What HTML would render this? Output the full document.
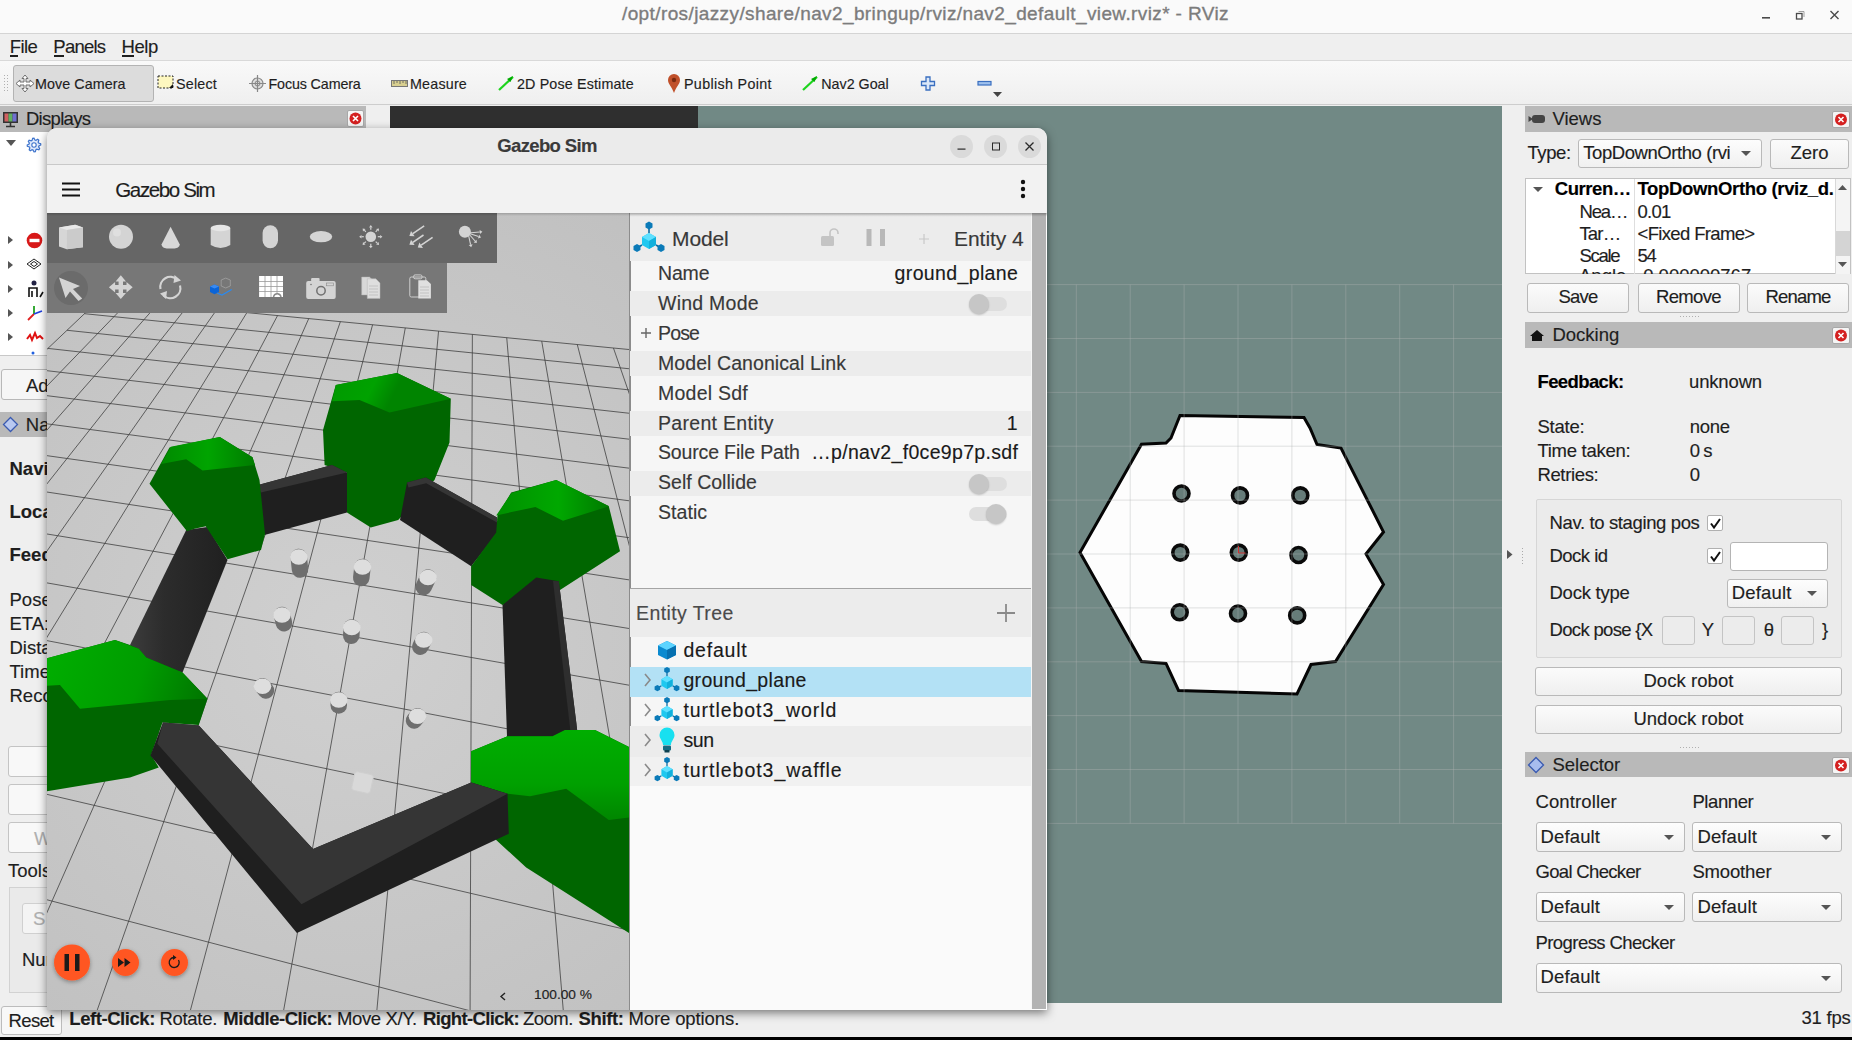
<!DOCTYPE html><html><head><meta charset="utf-8"><style>
html,body{margin:0;padding:0;width:1852px;height:1040px;overflow:hidden;background:#efefef;font-family:"Liberation Sans",sans-serif;}
div,span,svg{position:absolute;box-sizing:border-box;}
.t{white-space:nowrap;line-height:1;-webkit-text-stroke:0.15px currentColor;}
</style></head><body>
<div style="left:0px;top:0px;width:1852px;height:33px;background:#fafafa;"></div>
<div style="left:0px;top:33px;width:1852px;height:1px;background:#d4d4d4;"></div>
<span class="t" style="left:622.00px;top:3.92px;font-size:19px;color:#7c7c7c;letter-spacing:0.389px;-webkit-text-stroke:0.35px #7c7c7c;">/opt/ros/jazzy/share/nav2_bringup/rviz/nav2_default_view.rviz* - RViz</span>
<svg style="position:absolute;left:1755px;top:5px;" width="95" height="26" viewBox="0 0 95 26">
<rect x="7" y="12" width="8" height="1.6" fill="#4a4a4a"/>
<rect x="41.5" y="8.5" width="5.5" height="5.5" fill="none" stroke="#4a4a4a" stroke-width="1.3"/>
<path d="M43.5 6.5 H49 V12" fill="none" stroke="#8a8a8a" stroke-width="0.8"/>
<path d="M75.5 6 L83.5 14 M83.5 6 L75.5 14" stroke="#4a4a4a" stroke-width="1.4"/>
</svg>
<div style="left:0px;top:34px;width:1852px;height:26px;background:#efefef;"></div>
<div style="left:0px;top:60px;width:1852px;height:1px;background:#d9d9d9;"></div>
<span class="t" style="left:9.70px;top:38.14px;font-size:18.5px;color:#1e1e1e;letter-spacing:-0.603px;">File</span>
<span class="t" style="left:53.30px;top:38.14px;font-size:18.5px;color:#1e1e1e;letter-spacing:-0.761px;">Panels</span>
<span class="t" style="left:121.50px;top:38.14px;font-size:18.5px;color:#1e1e1e;letter-spacing:-0.387px;">Help</span>
<div style="left:9.5px;top:54.5px;width:8px;height:2px;background:#1e1e1e;"></div>
<div style="left:53.5px;top:54.5px;width:10px;height:2px;background:#1e1e1e;"></div>
<div style="left:121.5px;top:54.5px;width:12px;height:2px;background:#1e1e1e;"></div>
<div style="left:0px;top:61px;width:1852px;height:43px;background:linear-gradient(#f9f9f9,#efefef);"></div>
<div style="left:0px;top:104px;width:1852px;height:1px;background:#d0d0d0;"></div>
<svg style="position:absolute;left:3px;top:74px;" width="6" height="19" viewBox="0 0 6 19"><rect x="1" y="1" width="1" height="1" fill="#b0b0b0"/><rect x="1" y="4" width="1" height="1" fill="#b0b0b0"/><rect x="1" y="7" width="1" height="1" fill="#b0b0b0"/><rect x="1" y="10" width="1" height="1" fill="#b0b0b0"/><rect x="1" y="13" width="1" height="1" fill="#b0b0b0"/><rect x="1" y="16" width="1" height="1" fill="#b0b0b0"/><rect x="4" y="1" width="1" height="1" fill="#b0b0b0"/><rect x="4" y="4" width="1" height="1" fill="#b0b0b0"/><rect x="4" y="7" width="1" height="1" fill="#b0b0b0"/><rect x="4" y="10" width="1" height="1" fill="#b0b0b0"/><rect x="4" y="13" width="1" height="1" fill="#b0b0b0"/><rect x="4" y="16" width="1" height="1" fill="#b0b0b0"/></svg>
<div style="left:13px;top:65px;width:141px;height:37px;background:#dcdcdc;border:1px solid #b3b3b3;border-radius:3px;"></div>
<span class="t" style="left:34.90px;top:77.00px;font-size:14.3px;color:#1e1e1e;letter-spacing:0.081px;">Move Camera</span>
<span class="t" style="left:176.00px;top:77.00px;font-size:14.3px;color:#1e1e1e;letter-spacing:0.209px;">Select</span>
<span class="t" style="left:268.50px;top:77.00px;font-size:14.3px;color:#1e1e1e;letter-spacing:-0.131px;">Focus Camera</span>
<span class="t" style="left:410.00px;top:77.00px;font-size:14.3px;color:#1e1e1e;letter-spacing:0.195px;">Measure</span>
<span class="t" style="left:517.00px;top:77.00px;font-size:14.3px;color:#1e1e1e;letter-spacing:0.147px;">2D Pose Estimate</span>
<span class="t" style="left:684.00px;top:77.00px;font-size:14.3px;color:#1e1e1e;letter-spacing:0.333px;">Publish Point</span>
<span class="t" style="left:821.30px;top:77.00px;font-size:14.3px;color:#1e1e1e;letter-spacing:-0.018px;">Nav2 Goal</span>
<svg style="position:absolute;left:15px;top:74px;" width="20" height="20" viewBox="0 0 20 20"><g fill="#fff" stroke="#707070" stroke-width="1">
<path d="M10 1 L13 4.5 H11 V8 H15 V6 L19 9.5 L15 13 V11 H11 V14.5 H13 L10 18 L7 14.5 H9 V11 H5 V13 L1 9.5 L5 6 V8 H9 V4.5 H7 Z"/></g></svg>
<svg style="position:absolute;left:157px;top:75px;" width="18" height="15" viewBox="0 0 18 15"><rect x="1" y="1" width="15" height="12" fill="#fdf7c0" stroke="#222" stroke-width="1" stroke-dasharray="2,1.5"/><path d="M12 13 L16 9 L16 13Z" fill="#111"/></svg>
<svg style="position:absolute;left:248px;top:74px;" width="19" height="19" viewBox="0 0 19 19"><circle cx="9.5" cy="9.5" r="5.5" fill="#ddd" stroke="#888" stroke-width="1.2"/><path d="M9.5 1 V18 M1 9.5 H18" stroke="#888" stroke-width="1.2"/><circle cx="9.5" cy="9.5" r="2.5" fill="none" stroke="#888"/></svg>
<svg style="position:absolute;left:391px;top:79px;" width="17" height="9" viewBox="0 0 17 9"><rect x="0.5" y="1.5" width="16" height="6" fill="#d8cf90" stroke="#777" stroke-width="1"/><path d="M3 2v3M6 2v2M9 2v3M12 2v2M15 2v3" stroke="#555" stroke-width="0.8"/></svg>
<svg style="position:absolute;left:498px;top:75px;" width="17" height="16" viewBox="0 0 17 16"><path d="M1 15 L15 2" stroke="#1ed41e" stroke-width="2.2"/><path d="M15 1 L9 4 L12.5 7Z" fill="#0a0"/></svg>
<svg style="position:absolute;left:667px;top:73px;" width="14" height="21" viewBox="0 0 14 21"><path d="M7 20 C5 14 1 11 1 7 A6 6 0 0 1 13 7 C13 11 9 14 7 20Z" fill="#c0502a"/><circle cx="7" cy="7" r="2.2" fill="#7a2a10"/></svg>
<svg style="position:absolute;left:802px;top:75px;" width="17" height="16" viewBox="0 0 17 16"><path d="M1 15 L15 2" stroke="#1ed41e" stroke-width="2.2"/><path d="M15 1 L9 4 L12.5 7Z" fill="#0a0"/></svg>
<svg style="position:absolute;left:920px;top:76px;" width="16" height="15" viewBox="0 0 16 15"><path d="M6 1 H10 V5.5 H14.5 V9.5 H10 V14 H6 V9.5 H1.5 V5.5 H6Z" fill="#dce8f8" stroke="#3a6fc0" stroke-width="1.3"/></svg>
<svg style="position:absolute;left:977px;top:80px;" width="16" height="7" viewBox="0 0 16 7"><rect x="1" y="1.5" width="13" height="3.5" fill="#9fc1ee" stroke="#3a6fc0" stroke-width="1.2"/></svg>
<svg style="position:absolute;left:992px;top:91px;" width="11" height="7" viewBox="0 0 11 7"><path d="M1 1 H10 L5.5 6Z" fill="#444"/></svg>
<div style="left:0px;top:106px;width:366px;height:26px;background:#b9b9b9;"></div>
<span class="t" style="left:25.90px;top:109.74px;font-size:18.5px;color:#1e1e1e;letter-spacing:-0.689px;">Displays</span>
<svg style="position:absolute;left:2px;top:111px;" width="17" height="17" viewBox="0 0 17 17"><rect x="1" y="1" width="15" height="11" fill="#333"/><rect x="2.5" y="2.5" width="4" height="8" fill="#d06060"/><rect x="6.5" y="2.5" width="4" height="8" fill="#60b060"/><rect x="10.5" y="2.5" width="4" height="8" fill="#7070d0"/><path d="M8.5 12 V15 M4 15.5 H13" stroke="#333" stroke-width="1.6"/></svg>
<div style="left:347px;top:110px;width:17px;height:17px;background:#f5f5f5;border:1px solid #a8a8a8;border-radius:2px;"></div>
<svg style="position:absolute;left:349px;top:112px;" width="13" height="13" viewBox="0 0 13 13"><circle cx="6.5" cy="6.5" r="6" fill="#d42020"/><path d="M4 4 L9 9 M9 4 L4 9" stroke="#fff" stroke-width="1.6"/></svg>
<div style="left:0px;top:132px;width:366px;height:224px;background:#ffffff;"></div>
<div style="left:0px;top:355px;width:366px;height:1px;background:#c8c8c8;"></div>
<svg style="position:absolute;left:5px;top:139px;" width="12" height="9" viewBox="0 0 12 9"><path d="M1 1 H11 L6 7Z" fill="#555"/></svg>
<svg style="position:absolute;left:26px;top:137px;" width="16" height="16" viewBox="0 0 16 16"><polygon points="14.66,6.65 14.80,7.98 12.91,8.96 12.63,9.90 13.67,11.76 12.83,12.79 10.79,12.15 9.93,12.61 9.35,14.66 8.02,14.80 7.04,12.91 6.10,12.63 4.24,13.67 3.21,12.83 3.85,10.79 3.39,9.93 1.34,9.35 1.20,8.02 3.09,7.04 3.37,6.10 2.33,4.24 3.17,3.21 5.21,3.85 6.07,3.39 6.65,1.34 7.98,1.20 8.96,3.09 9.90,3.37 11.76,2.33 12.79,3.17 12.15,5.21 12.61,6.07" fill="#dfe9fb" stroke="#3f74cc" stroke-width="1.2"/><circle cx="8" cy="8" r="2.2" fill="#fff" stroke="#3f74cc" stroke-width="1.1"/></svg>
<svg style="position:absolute;left:7px;top:235.4px;" width="8" height="10" viewBox="0 0 8 10"><path d="M1 1 L6 5 L1 9Z" fill="#555"/></svg>
<svg style="position:absolute;left:7px;top:259.6px;" width="8" height="10" viewBox="0 0 8 10"><path d="M1 1 L6 5 L1 9Z" fill="#555"/></svg>
<svg style="position:absolute;left:7px;top:283.5px;" width="8" height="10" viewBox="0 0 8 10"><path d="M1 1 L6 5 L1 9Z" fill="#555"/></svg>
<svg style="position:absolute;left:7px;top:307.7px;" width="8" height="10" viewBox="0 0 8 10"><path d="M1 1 L6 5 L1 9Z" fill="#555"/></svg>
<svg style="position:absolute;left:7px;top:331.5px;" width="8" height="10" viewBox="0 0 8 10"><path d="M1 1 L6 5 L1 9Z" fill="#555"/></svg>
<svg style="position:absolute;left:26px;top:232px;" width="17" height="17" viewBox="0 0 17 17"><circle cx="8.5" cy="8.5" r="7.8" fill="#d81818"/><rect x="3.5" y="6.8" width="10" height="3.4" fill="#fff"/></svg>
<svg style="position:absolute;left:26px;top:258px;" width="16" height="12" viewBox="0 0 16 12"><path d="M8 1 L15 6 L8 11 L1 6Z" fill="none" stroke="#222" stroke-width="1"/><path d="M8 3.5 L11.5 6 L8 8.5 L4.5 6Z" fill="none" stroke="#222" stroke-width="1"/></svg>
<svg style="position:absolute;left:26px;top:280px;" width="18" height="18" viewBox="0 0 18 18"><circle cx="8" cy="3" r="2.5" fill="#224"/><path d="M3 17 V8 H11 V17 M6 11 V17 M14 17 L17 12" stroke="#111" stroke-width="1.6" fill="none"/></svg>
<svg style="position:absolute;left:26px;top:304px;" width="17" height="17" viewBox="0 0 17 17"><path d="M8 10 L2 16 M8 10 L8 2 M8 10 L16 7" stroke-width="1.8" fill="none"/><path d="M8 10 L2 16" stroke="#e02020" stroke-width="1.8"/><path d="M8 10 L8 2" stroke="#20a020" stroke-width="1.8"/><path d="M8 10 L16 7" stroke="#2040e0" stroke-width="1.8"/></svg>
<svg style="position:absolute;left:26px;top:330px;" width="18" height="14" viewBox="0 0 18 14"><path d="M1 9 L4 5 L6 10 L9 3 L11 8 L14 6 L17 9" stroke="#e01010" stroke-width="2" fill="none"/></svg>
<svg style="position:absolute;left:30px;top:350px;" width="6" height="6" viewBox="0 0 6 6"><circle cx="3" cy="3" r="1.5" fill="#2060e0"/></svg>
<div style="left:1px;top:369px;width:120px;height:31px;background:#f6f6f6;border:1px solid #b8b8b8;border-radius:3px;"></div>
<span class="t" style="left:26.00px;top:377.14px;font-size:18.5px;color:#1e1e1e;">Add</span>
<div style="left:0px;top:412px;width:366px;height:25px;background:#b9b9b9;"></div>
<svg style="position:absolute;left:2px;top:416px;" width="17" height="17" viewBox="0 0 17 17"><path d="M8.5 1.5 L15.5 8.5 L8.5 15.5 L1.5 8.5Z" fill="#b8c8f0" stroke="#3a5ab0" stroke-width="1.3"/></svg>
<span class="t" style="left:25.80px;top:416.14px;font-size:18.5px;color:#1e1e1e;">Navigation 2</span>
<span class="t" style="left:9.50px;top:460.14px;font-size:18.5px;color:#1e1e1e;font-weight:bold;">Navigation:</span>
<span class="t" style="left:9.50px;top:503.14px;font-size:18.5px;color:#1e1e1e;font-weight:bold;">Localization:</span>
<span class="t" style="left:9.50px;top:546.14px;font-size:18.5px;color:#1e1e1e;font-weight:bold;">Feedback:</span>
<span class="t" style="left:9.50px;top:591.14px;font-size:18.5px;color:#1e1e1e;">Poses</span>
<span class="t" style="left:9.50px;top:615.14px;font-size:18.5px;color:#1e1e1e;">ETA:</span>
<span class="t" style="left:9.50px;top:639.14px;font-size:18.5px;color:#1e1e1e;">Distance</span>
<span class="t" style="left:9.50px;top:663.14px;font-size:18.5px;color:#1e1e1e;">Time</span>
<span class="t" style="left:9.50px;top:687.14px;font-size:18.5px;color:#1e1e1e;">Recoveries</span>
<div style="left:8px;top:746px;width:150px;height:31px;background:#f8f8f8;border:1px solid #c4c4c4;border-radius:3px;"></div>
<div style="left:8px;top:784px;width:150px;height:31px;background:#f8f8f8;border:1px solid #c4c4c4;border-radius:3px;"></div>
<div style="left:8px;top:822px;width:150px;height:31px;background:#f8f8f8;border:1px solid #c4c4c4;border-radius:3px;"></div>
<span class="t" style="left:34.00px;top:830.14px;font-size:18.5px;color:#b0b0b0;">W</span>
<span class="t" style="left:8.00px;top:862.14px;font-size:18.5px;color:#1e1e1e;">Tools</span>
<div style="left:9px;top:887px;width:300px;height:106px;background:#eaeaea;border:1px solid #d2d2d2;"></div>
<div style="left:22px;top:903px;width:200px;height:31px;background:#f4f4f4;border:1px solid #d0d0d0;border-radius:3px;"></div>
<span class="t" style="left:33.00px;top:910.14px;font-size:18.5px;color:#b0b0b0;">S</span>
<span class="t" style="left:22.00px;top:951.14px;font-size:18.5px;color:#1e1e1e;">Number</span>
<div style="left:366px;top:105px;width:24px;height:23px;background:#efefef;"></div>
<div style="left:390px;top:106px;width:1113px;height:897px;background:#718985;"></div>
<div style="left:0px;top:104px;width:1852px;height:1px;background:#cdcdcd;"></div>
<div style="left:0px;top:105px;width:1852px;height:1px;background:#efefef;"></div>
<div style="left:390px;top:106px;width:308px;height:22px;background:#2f2f2f;"></div>
<div style="left:0px;top:1003px;width:1852px;height:33px;background:#efefef;"></div>
<div style="left:1px;top:1006px;width:61px;height:29px;background:#f8f8f8;border:1px solid #bcbcbc;border-radius:3px;"></div>
<span class="t" style="left:8.60px;top:1012.14px;font-size:18.5px;color:#1e1e1e;letter-spacing:-0.666px;">Reset</span>
<span class="t" style="left:69.30px;top:1010.44px;font-size:18.5px;color:#1e1e1e;font-weight:bold;letter-spacing:-0.441px;">Left-Click:</span>
<span class="t" style="left:159.50px;top:1010.44px;font-size:18.5px;color:#1e1e1e;letter-spacing:-0.307px;">Rotate.</span>
<span class="t" style="left:223.30px;top:1010.44px;font-size:18.5px;color:#1e1e1e;font-weight:bold;letter-spacing:-0.479px;">Middle-Click:</span>
<span class="t" style="left:337.00px;top:1010.44px;font-size:18.5px;color:#1e1e1e;letter-spacing:-0.362px;">Move X/Y.</span>
<span class="t" style="left:423.00px;top:1010.44px;font-size:18.5px;color:#1e1e1e;font-weight:bold;letter-spacing:-0.650px;">Right-Click:</span>
<span class="t" style="left:522.90px;top:1010.44px;font-size:18.5px;color:#1e1e1e;letter-spacing:-0.466px;">Zoom.</span>
<span class="t" style="left:578.50px;top:1010.44px;font-size:18.5px;color:#1e1e1e;font-weight:bold;letter-spacing:-0.361px;">Shift:</span>
<span class="t" style="left:628.40px;top:1010.44px;font-size:18.5px;color:#1e1e1e;letter-spacing:-0.099px;">More options.</span>
<span class="t" style="left:1801.50px;top:1009.14px;font-size:18.5px;color:#1e1e1e;letter-spacing:-0.233px;">31 fps</span>
<div style="left:0px;top:1037px;width:1852px;height:3px;background:#000000;"></div>
<svg style="position:absolute;left:390px;top:105px;" width="1113" height="898" viewBox="0 0 1113 898"><polygon points="790.0,310.5 914.0,312.5 920.0,323.0 927.0,339.5 951.0,343.0 993.5,427.0 976.0,449.0 993.5,479.5 945.5,556.5 921.0,559.5 907.0,589.0 788.5,585.5 776.0,558.4 751.5,556.5 690.0,447.6 751.5,339.3 776.0,338.0 781.0,333.0" fill="#fdfdfd" stroke="#050505" stroke-width="3" stroke-linejoin="miter"/><circle cx="791.5" cy="388.5" r="7.5" fill="#667c79" stroke="#0a0a0a" stroke-width="3.6"/><circle cx="850" cy="390.4" r="7.5" fill="#667c79" stroke="#0a0a0a" stroke-width="3.6"/><circle cx="910.3" cy="390.4" r="7.5" fill="#667c79" stroke="#0a0a0a" stroke-width="3.6"/><circle cx="790.3" cy="447.6" r="7.5" fill="#667c79" stroke="#0a0a0a" stroke-width="3.6"/><circle cx="848.8" cy="447.6" r="7.5" fill="#667c79" stroke="#0a0a0a" stroke-width="3.6"/><circle cx="908.5" cy="450" r="7.5" fill="#667c79" stroke="#0a0a0a" stroke-width="3.6"/><circle cx="789.7" cy="507.29999999999995" r="7.5" fill="#667c79" stroke="#0a0a0a" stroke-width="3.6"/><circle cx="848" cy="508.5" r="7.5" fill="#667c79" stroke="#0a0a0a" stroke-width="3.6"/><circle cx="907.2" cy="510.4" r="7.5" fill="#667c79" stroke="#0a0a0a" stroke-width="3.6"/><path d="M578.5 179.60000000000002V718.4M578.5 179.6H1117.5M632.4 179.60000000000002V718.4M578.5 233.5H1117.5M686.3 179.60000000000002V718.4M578.5 287.4H1117.5M740.2 179.60000000000002V718.4M578.5 341.2H1117.5M794.1 179.60000000000002V718.4M578.5 395.1H1117.5M848.0 179.60000000000002V718.4M578.5 449.0H1117.5M901.9 179.60000000000002V718.4M578.5 502.9H1117.5M955.8 179.60000000000002V718.4M578.5 556.8H1117.5M1009.7 179.60000000000002V718.4M578.5 610.6H1117.5M1063.6 179.60000000000002V718.4M578.5 664.5H1117.5M1117.5 179.60000000000002V718.4M578.5 718.4H1117.5" stroke="rgba(175,180,180,0.38)" stroke-width="1" fill="none"/><path d="M848.5 448 h7 M848.5 448 v-7" stroke="#d03030" stroke-width="1"/></svg>
<div style="left:47px;top:128px;width:1000px;height:882px;border-radius:10px 10px 0 0;box-shadow:0 3px 10px rgba(0,0,0,0.5);background:#f6f6f6;overflow:hidden"><div style="left:0;top:0;width:1000px;height:37px;background:#ebebeb;border-bottom:1px solid #c9c9c9"></div><div style="left:0;top:37px;width:1000px;height:48px;background:#f2f2f2"></div></div>
<span class="t" style="left:497.30px;top:137.14px;font-size:18.5px;color:#3a3a3a;font-weight:bold;letter-spacing:-0.649px;">Gazebo Sim</span>
<svg style="position:absolute;left:949.5px;top:134.5px;" width="23" height="23" viewBox="0 0 23 23"><circle cx="11.5" cy="11.5" r="11.5" fill="#dadada"/></svg>
<svg style="position:absolute;left:983.5px;top:134.5px;" width="23" height="23" viewBox="0 0 23 23"><circle cx="11.5" cy="11.5" r="11.5" fill="#dadada"/></svg>
<svg style="position:absolute;left:1017.5px;top:134.5px;" width="23" height="23" viewBox="0 0 23 23"><circle cx="11.5" cy="11.5" r="11.5" fill="#dadada"/></svg>
<svg style="position:absolute;left:949.5px;top:134.5px;" width="23" height="23" viewBox="0 0 23 23"><rect x="7.5" y="13.5" width="8" height="1.2" fill="#2a2a2a"/></svg>
<svg style="position:absolute;left:983.5px;top:134.5px;" width="23" height="23" viewBox="0 0 23 23"><rect x="8.5" y="8" width="7" height="7" fill="none" stroke="#2a2a2a" stroke-width="1"/></svg>
<svg style="position:absolute;left:1017.5px;top:134.5px;" width="23" height="23" viewBox="0 0 23 23"><path d="M7.5 7.5 L15.5 15.5 M15.5 7.5 L7.5 15.5" stroke="#2a2a2a" stroke-width="1.3"/></svg>
<svg style="position:absolute;left:61px;top:181px;" width="20" height="16" viewBox="0 0 20 16"><rect x="1" y="1.5" width="18" height="2" fill="#111"/><rect x="1" y="7.5" width="18" height="2" fill="#111"/><rect x="1" y="13.5" width="18" height="2" fill="#111"/></svg>
<span class="t" style="left:115.30px;top:179.95px;font-size:20.5px;color:#1e1e1e;letter-spacing:-1.380px;">Gazebo Sim</span>
<svg style="position:absolute;left:1019px;top:178px;" width="8" height="22" viewBox="0 0 8 22"><circle cx="4" cy="4" r="2.2" fill="#111"/><circle cx="4" cy="11" r="2.2" fill="#111"/><circle cx="4" cy="18" r="2.2" fill="#111"/></svg>
<div style="left:47px;top:213px;width:1000px;height:3px;background:linear-gradient(rgba(0,0,0,0.18),rgba(0,0,0,0));z-index:5"></div>
<svg style="position:absolute;left:47px;top:213px;" width="582" height="797" viewBox="0 0 582 797"><defs><clipPath id="cv"><rect x="0" y="0" width="582" height="797"/></clipPath><radialGradient id="flr" cx="300" cy="420" r="520" gradientUnits="userSpaceOnUse"><stop offset="0" stop-color="#d0d0d0"/><stop offset="1" stop-color="#c0c0c0"/></radialGradient><linearGradient id="gtop" x1="0" y1="0" x2="0" y2="1"><stop offset="0" stop-color="#009a00"/><stop offset="1" stop-color="#00a600"/></linearGradient><linearGradient id="w3g" x1="0" y1="0" x2="1" y2="0"><stop offset="0" stop-color="#3c3c3c"/><stop offset="0.35" stop-color="#2c2c2c"/><stop offset="1" stop-color="#202020"/></linearGradient><linearGradient id="gtopL" x1="0" y1="0" x2="1" y2="0"><stop offset="0" stop-color="#008a00"/><stop offset="0.5" stop-color="#00a400"/><stop offset="1" stop-color="#007c00"/></linearGradient><linearGradient id="gtopR" x1="0" y1="0" x2="1" y2="0"><stop offset="0" stop-color="#009000"/><stop offset="0.55" stop-color="#00a800"/><stop offset="1" stop-color="#007a00"/></linearGradient><linearGradient id="gtopB" gradientUnits="userSpaceOnUse" x1="10" y1="440" x2="160" y2="490"><stop offset="0" stop-color="#00ac00"/><stop offset="0.55" stop-color="#009c00"/><stop offset="1" stop-color="#007400"/></linearGradient><linearGradient id="gtopC" gradientUnits="userSpaceOnUse" x1="290" y1="170" x2="340" y2="195"><stop offset="0" stop-color="#009a00"/><stop offset="0.6" stop-color="#00a200"/><stop offset="1" stop-color="#008400"/></linearGradient><linearGradient id="gtopD" gradientUnits="userSpaceOnUse" x1="0" y1="517" x2="0" y2="607"><stop offset="0" stop-color="#00ae00"/><stop offset="0.6" stop-color="#00a000"/><stop offset="1" stop-color="#008600"/></linearGradient></defs><g clip-path="url(#cv)"><rect x="0" y="0" width="582" height="797" fill="url(#flr)"/><path d="M53.51 85.49L-1688.20 1738.40M81.89 88.23L-1599.71 1828.81M110.71 91.01L-1502.88 1927.74M139.97 93.83L-1396.48 2036.44M169.70 96.70L-1279.03 2156.43M199.89 99.62L-1148.70 2289.58M230.56 102.58L-1003.26 2438.18M261.73 105.59L-839.91 2605.07M293.40 108.65L-655.13 2793.85M325.58 111.75L-444.40 3009.15M358.29 114.91L-201.85 3256.95M391.55 118.12L80.33 3545.24M425.36 121.39L412.69 3884.80M459.74 124.71L809.94 4290.66M494.71 128.08L1293.15 4784.33M530.27 131.52L1893.59 5397.78M566.45 135.01L2659.80 6180.59M603.26 138.56L3671.46 7214.16M640.71 142.18L5068.96 8641.93M678.83 145.86L7125.08 10742.59M717.64 149.61L10448.94 14138.45M53.51 85.49L717.64 149.61M37.48 100.70L732.48 170.95M20.02 117.27L748.93 194.59M0.91 135.40L767.24 220.91M-20.08 155.32L787.76 250.41M-43.24 177.30L810.91 283.68M-68.94 201.69L837.23 321.52M-97.61 228.90L867.42 364.92M-129.81 259.46L902.41 415.21M-166.22 294.01L943.42 474.18M-207.72 333.40L992.18 544.27M-255.47 378.71L1051.10 628.97M-311.00 431.41L1123.73 733.37M-376.37 493.44L1215.47 865.24M-454.44 567.54L1335.02 1037.10M-549.34 657.60L1497.28 1270.35M-667.15 769.40L1730.12 1605.07M-817.29 911.89L2092.39 2125.83M-1015.22 1099.72L2733.55 3047.50M-1288.04 1358.64L4177.16 5122.70M-1688.20 1738.40L10448.94 14138.45" stroke="#404040" stroke-width="0.8" fill="none"/><line x1="251.75" y1="344" x2="253" y2="356.5" stroke="#6e6e6e" stroke-width="16.5" stroke-linecap="round"/><ellipse cx="251.75" cy="344" rx="8.8" ry="7.82" fill="#dedede"/><line x1="315.5" y1="354" x2="314.25" y2="365.0" stroke="#6e6e6e" stroke-width="16.5" stroke-linecap="round"/><ellipse cx="315.5" cy="354" rx="8.8" ry="7.82" fill="#dedede"/><line x1="381" y1="364.5" x2="376.7" y2="373.9" stroke="#6e6e6e" stroke-width="16.5" stroke-linecap="round"/><ellipse cx="381" cy="364.5" rx="8.8" ry="7.82" fill="#dedede"/><line x1="235" y1="402" x2="237" y2="410.29999999999995" stroke="#6e6e6e" stroke-width="16.5" stroke-linecap="round"/><ellipse cx="235" cy="402" rx="8.8" ry="7.82" fill="#dedede"/><line x1="304.75" y1="414.5" x2="304.25" y2="422.75" stroke="#6e6e6e" stroke-width="16.5" stroke-linecap="round"/><ellipse cx="304.75" cy="414.5" rx="8.8" ry="7.82" fill="#dedede"/><line x1="376.75" y1="427" x2="373.3" y2="433.70000000000005" stroke="#6e6e6e" stroke-width="16.5" stroke-linecap="round"/><ellipse cx="376.75" cy="427" rx="8.8" ry="7.82" fill="#dedede"/><line x1="215.5" y1="473.25" x2="219" y2="477.5" stroke="#6e6e6e" stroke-width="16.5" stroke-linecap="round"/><ellipse cx="215.5" cy="473.25" rx="8.8" ry="7.82" fill="#dedede"/><line x1="291.75" y1="487" x2="291.75" y2="492.5" stroke="#6e6e6e" stroke-width="16.5" stroke-linecap="round"/><ellipse cx="291.75" cy="487" rx="8.8" ry="7.82" fill="#dedede"/><line x1="370.5" y1="503.25" x2="367" y2="507.5" stroke="#6e6e6e" stroke-width="16.5" stroke-linecap="round"/><ellipse cx="370.5" cy="503.25" rx="8.8" ry="7.82" fill="#dedede"/><rect x="306" y="560" width="19" height="19" rx="3" fill="#d9d9d9" stroke="#cfcfcf" transform="rotate(12 315.5 569.5)"/><polygon points="288.8,172.0 350.0,160.0 403.8,185.8 402.5,229.5 387.5,267.0 351.2,307.0 323.8,314.5 300.0,299.5 300.0,259.5 277.6,252.0 276.0,217.0" fill="#006600" /><polygon points="288.8,172.0 350.0,160.0 403.8,185.8 342.5,199.5 312.5,187.0 285.0,188.2" fill="url(#gtopC)" /><polygon points="206.2,285.8 211.2,272.0 285.0,252.0 300.0,259.5 300.0,299.5 217.5,322.0" fill="#1f1f1f" /><polygon points="211.2,272.0 285.0,252.0 300.0,259.5 213.8,279.5" fill="#353535" /><polygon points="360.0,269.5 378.8,264.5 450.0,304.5 450.0,320.8 424.2,353.2 353.0,307.0" fill="#1f1f1f" /><polygon points="360.0,269.5 378.8,264.5 450.0,304.5 450.0,309.5 379.2,270.2 361.5,274.5" fill="#353535" /><polygon points="139.2,317.0 160.5,314.0 180.5,347.0 135.5,459.5 99.2,449.0 83.0,432.0" fill="url(#w3g)" /><polygon points="102.5,270.8 122.5,234.5 172.8,224.1 205.5,244.3 212.5,267.0 218.0,321.0 214.0,337.0 180.5,346.2 158.8,313.2 147.5,315.8 140.0,318.2" fill="#006600" /><polygon points="123.8,233.7 172.8,224.1 205.5,244.3 208.0,252.0 155.5,257.4 139.2,246.2 114.0,251.0" fill="url(#gtopL)" /><polygon points="464.2,279.5 509.2,267.0 561.8,293.2 573.0,338.2 513.0,377.0 455.5,392.0 424.2,372.0 424.2,353.2 449.2,319.5 450.5,302.0" fill="#006600" /><polygon points="449.2,302.4 464.5,280.0 509.2,267.0 562.2,293.2 516.0,307.8 488.4,294.0" fill="url(#gtopR)" /><polygon points="455.5,392.0 489.2,364.5 511.8,368.2 532.0,532.0 460.3,532.0" fill="#1f1f1f" /><polygon points="506.0,368.0 511.8,368.2 532.0,532.0 525.0,532.0" fill="#2e2e2e" /><polygon points="-7.0,447.0 68.0,427.0 83.0,432.0 91.8,435.8 99.2,444.5 135.5,459.5 160.5,485.8 151.8,512.0 115.5,509.5 104.2,542.0 111.8,554.5 83.0,564.5 -7.0,579.5" fill="#006600" /><polygon points="-7.0,447.0 68.0,427.0 91.8,435.8 99.2,444.5 135.5,459.5 160.5,485.8 123.0,487.0 33.0,495.8 13.0,472.0 -7.0,473.0" fill="url(#gtopB)" /><polygon points="424.2,538.2 460.5,523.2 505.5,523.2 518.0,517.0 548.0,517.0 593.0,539.5 593.0,727.0 479.2,654.5 449.2,627.0 424.2,569.5" fill="#006600" /><polygon points="424.2,538.2 460.5,523.2 505.5,523.2 518.0,517.0 548.0,517.0 593.0,539.5 593.0,603.2 561.8,607.0 519.2,575.8 483.0,583.2 460.5,580.8 424.2,569.5" fill="url(#gtopD)" /><polygon points="116.0,509.4 151.8,512.4 266.0,636.0 424.2,569.5 460.5,580.8 461.8,620.8 249.9,720.0 103.4,542.4" fill="#1f1f1f" /><polygon points="116.0,509.4 151.8,512.4 266.0,636.0 424.2,569.5 460.5,580.8 254.5,691.2 110.3,530.8" fill="#353535" /></g><rect x="0" y="0" width="450" height="50" fill="#666666"/><rect x="0" y="50" width="400" height="50" fill="#777777"/><circle cx="24" cy="75" r="17" fill="#6b6b6b"/><path d="M12 14.5 L28.2 11.7 L36 14.5 V34.2 L19.8 36.3 L12 33.5Z" fill="#d6d6d6"/><path d="M12 14.5 L28.2 11.7 L36 14.5 L20 17Z" fill="#e8e8e8"/><path d="M20 17 L36 14.5 V34.2 L19.8 36.3Z" fill="#cbcbcb"/><circle cx="74" cy="23.7" r="12" fill="#d4d4d4"/><circle cx="70" cy="19.5" r="4" fill="#e4e4e4" opacity="0.7"/><path d="M123.6 13.8 L132.8 31.4 Q132.8 35.6 123.6 35.6 Q114.5 35.6 114.5 31.4Z" fill="#d8d8d8"/><path d="M163.7 15 V32 Q173.5 38 183.3 32 V15Z" fill="#d4d4d4"/><ellipse cx="173.5" cy="15" rx="9.8" ry="3.3" fill="#e6e6e6"/><rect x="215.6" y="12.2" width="15.4" height="23" rx="7.7" fill="#d4d4d4"/><ellipse cx="274" cy="23.7" rx="11.2" ry="5.6" fill="#d4d4d4"/><circle cx="323.8" cy="23.7" r="5.3" fill="#d4d4d4"/><line x1="323.8" y1="16.7" x2="323.8" y2="14.4" stroke="#d4d4d4" stroke-width="1.2"/><path d="M323.8 12.1 L325.6 14.4 L322.0 14.4Z" fill="#d4d4d4"/><line x1="328.7" y1="18.8" x2="330.3" y2="17.2" stroke="#d4d4d4" stroke-width="1.2"/><path d="M332.0 15.5 L331.6 18.4 L329.1 15.9Z" fill="#d4d4d4"/><line x1="330.8" y1="23.7" x2="333.1" y2="23.7" stroke="#d4d4d4" stroke-width="1.2"/><path d="M335.4 23.7 L333.1 25.5 L333.1 21.9Z" fill="#d4d4d4"/><line x1="328.7" y1="28.6" x2="330.3" y2="30.2" stroke="#d4d4d4" stroke-width="1.2"/><path d="M332.0 31.9 L329.1 31.5 L331.6 29.0Z" fill="#d4d4d4"/><line x1="323.8" y1="30.7" x2="323.8" y2="33.0" stroke="#d4d4d4" stroke-width="1.2"/><path d="M323.8 35.3 L322.0 33.0 L325.6 33.0Z" fill="#d4d4d4"/><line x1="318.9" y1="28.6" x2="317.3" y2="30.2" stroke="#d4d4d4" stroke-width="1.2"/><path d="M315.6 31.9 L316.0 29.0 L318.5 31.5Z" fill="#d4d4d4"/><line x1="316.8" y1="23.7" x2="314.5" y2="23.7" stroke="#d4d4d4" stroke-width="1.2"/><path d="M312.2 23.7 L314.5 21.9 L314.5 25.5Z" fill="#d4d4d4"/><line x1="318.9" y1="18.8" x2="317.3" y2="17.2" stroke="#d4d4d4" stroke-width="1.2"/><path d="M315.6 15.5 L318.5 15.9 L316.0 18.4Z" fill="#d4d4d4"/><line x1="377.2" y1="12.9" x2="365.8" y2="20.7" stroke="#d4d4d4" stroke-width="1.6"/><path d="M362.4 23.0 L364.0 18.0 L367.6 23.3Z" fill="#d4d4d4"/><line x1="376.5" y1="22.0" x2="365.8" y2="29.4" stroke="#d4d4d4" stroke-width="1.6"/><path d="M362.4 31.8 L364.0 26.8 L367.6 32.1Z" fill="#d4d4d4"/><line x1="385.6" y1="24.4" x2="374.2" y2="32.2" stroke="#d4d4d4" stroke-width="1.6"/><path d="M370.8 34.6 L372.4 29.6 L376.0 34.9Z" fill="#d4d4d4"/><circle cx="417.9" cy="18.8" r="6" fill="#d4d4d4"/><line x1="421.0" y1="20.0" x2="432.8" y2="19.0" stroke="#d4d4d4" stroke-width="1.1"/><path d="M435.4 18.8 L433.0 21.0 L432.6 17.0Z" fill="#d4d4d4"/><line x1="421.0" y1="20.0" x2="431.5" y2="23.6" stroke="#d4d4d4" stroke-width="1.1"/><path d="M434.0 24.4 L430.9 25.5 L432.2 21.7Z" fill="#d4d4d4"/><line x1="421.0" y1="20.0" x2="428.1" y2="28.0" stroke="#d4d4d4" stroke-width="1.1"/><path d="M429.8 30.0 L426.6 29.4 L429.6 26.7Z" fill="#d4d4d4"/><line x1="421.0" y1="20.0" x2="423.6" y2="31.7" stroke="#d4d4d4" stroke-width="1.1"/><path d="M424.2 34.2 L421.7 32.1 L425.6 31.2Z" fill="#d4d4d4"/><path d="M12 64.4 L33 73 L26 76 L35.2 85.5 L31.5 88 L23 78.5 L18.5 85 Z" fill="#d4d4d4"/><path d="M73.8 62.3 L79 68.5 H76 V72 H79.5 V69 L85.7 74.2 L79.5 79.5 V76.5 H76 V80 H79 L73.8 86.1 L68.6 80 H71.6 V76.5 H68.1 V79.5 L61.9 74.2 L68.1 69 V72 H71.6 V68.5 H68.6 Z" fill="#d4d4d4"/><path d="M113.5 76 A10 10 0 0 1 130 66.5 M133 72.5 A10 10 0 0 1 116.5 82.5" stroke="#d4d4d4" stroke-width="2.2" fill="none"/><path d="M127.5 62 L134 67.5 L126.5 70Z M119 86 L113 80.5 L120 78Z" fill="#d4d4d4"/><path d="M163 73.5 L167.5 71.4 L172 73.5 V79 L167.5 81.2 L163 79Z" fill="#0a64d8"/><path d="M163 73.5 L167.5 71.4 L172 73.5 L167.5 75.6Z" fill="#3a8af0"/><path d="M170 80 L175 82 L184.7 76.5" stroke="#2a8af0" stroke-width="1.3" fill="none"/><path d="M174.2 67 L178.7 65.1 L183.3 67 V73 L178.7 75 L174.2 73Z" fill="none" stroke="#a8a8a8" stroke-width="0.7"/><rect x="212.1" y="63" width="23.9" height="21" fill="#fff"/><path d="M212.1 68.5H236M212.1 73.5H236M212.1 78.5H236M218 63V84M224 63V84M230 63V84" stroke="#9a9a9a" stroke-width="0.8"/><path d="M226.5 84 A3.8 3.8 0 0 1 234 84" fill="#fff" stroke="#8a8a8a" stroke-width="1.5"/><rect x="259.2" y="67.9" width="29.5" height="18.2" rx="2" fill="#d4d4d4"/><rect x="264.1" y="65.1" width="8.5" height="3.5" rx="1" fill="#d4d4d4"/><circle cx="274" cy="77.7" r="4.2" fill="none" stroke="#727272" stroke-width="1.5"/><rect x="279.6" y="70" width="7" height="2.8" fill="none" stroke="#8a8a8a" stroke-width="0.6"/><circle cx="264" cy="71.5" r="0.8" fill="#777"/><path d="M314.7 64.1 H322.5 L326.6 68 V81.9 H314.7Z" fill="#d8d8d8" stroke="#b4b4b4" stroke-width="0.5"/><path d="M320.3 65.8 H328.8 L333 70 V85.4 H320.3Z" fill="#dedede" stroke="#b4b4b4" stroke-width="0.5"/><path d="M322 73H331M322 76H331M322 79H331M322 82H331" stroke="#b0b0b0" stroke-width="0.6"/><rect x="362.8" y="64" width="16" height="20" rx="1.5" fill="none" stroke="#cfcfcf" stroke-width="1"/><rect x="366.6" y="61.9" width="8.4" height="3.9" rx="1.5" fill="none" stroke="#cfcfcf" stroke-width="1"/><path d="M371.3 67.2 H379.9 L383.9 71 V85.4 H371.3Z" fill="#e0e0e0"/><path d="M373 74H382M373 77H382M373 80H382M373 83H382" stroke="#b0b0b0" stroke-width="0.6"/><defs><filter id="sh" x="-50%" y="-50%" width="200%" height="200%"><feDropShadow dx="0" dy="1.5" stdDeviation="2" flood-opacity="0.35"/></filter></defs><circle cx="25" cy="749.5" r="18" fill="#ff5722" filter="url(#sh)"/><rect x="17.5" y="741" width="4.5" height="17" fill="#1a1a1a"/><rect x="28" y="741" width="4.5" height="17" fill="#1a1a1a"/><circle cx="78.5" cy="749.5" r="13.5" fill="#ff5722" filter="url(#sh)"/><path d="M71 745 L77 749.5 L71 754Z M77.5 745 L83.5 749.5 L77.5 754Z" fill="#1a1a1a"/><circle cx="127.5" cy="749.5" r="13.5" fill="#ff5722" filter="url(#sh)"/><path d="M131.5 747 A5 5 0 1 1 127 744.5" stroke="#1a1a1a" stroke-width="1.3" fill="none"/><path d="M126 742 L129.5 744.5 L126 747Z" fill="#1a1a1a"/></svg>
<span class="t" style="left:534.10px;top:988.10px;font-size:13.7px;color:#222;">100.00 %</span>
<svg style="position:absolute;left:498px;top:990px;" width="10" height="12" viewBox="0 0 10 12"><path d="M7 3 L3 6.5 L7 10" stroke="#222" stroke-width="1.4" fill="none"/></svg>
<div style="left:629px;top:213px;width:2px;height:797px;background:#a9a9a9;"></div>
<div style="left:630px;top:213px;width:401px;height:797px;background:#f6f6f6;"></div>
<div style="left:629px;top:213px;width:1.5px;height:797px;background:#8c8c8c;"></div>
<div style="left:1032px;top:213px;width:14px;height:796px;background:#b3b3b3;"></div>
<div style="left:1046px;top:213px;width:1px;height:797px;background:#fdfdfd;"></div>
<div style="left:630px;top:1009px;width:417px;height:1px;background:#fdfdfd;"></div>
<div style="left:630px;top:213px;width:401px;height:48px;background:#ececec;"></div>
<div style="left:630px;top:291.2px;width:401px;height:25px;background:#ececec;"></div>
<div style="left:630px;top:351px;width:401px;height:25px;background:#ececec;"></div>
<div style="left:630px;top:411px;width:401px;height:25px;background:#ececec;"></div>
<div style="left:630px;top:471px;width:401px;height:25px;background:#ececec;"></div>
<div style="left:630px;top:213px;width:417px;height:4px;background:linear-gradient(rgba(0,0,0,0.13),rgba(0,0,0,0));"></div>
<svg style="position:absolute;left:630px;top:213px;" width="40" height="45" viewBox="0 0 40 45"><g transform="translate(19,28) scale(1.0)"><path d="M0 -8 V-14 M-7 4 L-12 7 M7 4 L12 7" stroke="#0a6aa0" stroke-width="1.6"/><path d="M0 -8 L7 -4 V4 L0 8 L-7 4 V-4Z" fill="#1ec8f0"/><path d="M0 -8 L7 -4 L0 0 L-7 -4Z" fill="#5fe0ff"/><path d="M0 0 L7 -4 V4 L0 8Z" fill="#12b0dc"/><path d="M0 -19.5 L3.5 -17.5 V-13.5 L0 -11.5 L-3.5 -13.5 V-17.5Z" fill="#0a7ab8"/><path d="M-12 3 L-8.5 5 V9 L-12 11 L-15.5 9 V5Z" fill="#0a7ab8"/><path d="M12 3 L15.5 5 V9 L12 11 L8.5 9 V5Z" fill="#0a7ab8"/></g></svg>
<span class="t" style="left:672.10px;top:228.02px;font-size:21px;color:#383838;letter-spacing:-0.140px;">Model</span>
<svg style="position:absolute;left:818px;top:227px;" width="22" height="22" viewBox="0 0 22 22"><rect x="3" y="9" width="13" height="10" rx="1.5" fill="#c4c4c4"/><path d="M12 9 V6 A4 4 0 0 1 20 6 V7" stroke="#c4c4c4" stroke-width="1.6" fill="none"/></svg>
<svg style="position:absolute;left:864px;top:228px;" width="26" height="20" viewBox="0 0 26 20"><rect x="2.5" y="1" width="5" height="17" fill="#b8b8b8"/><rect x="16" y="1" width="5" height="17" fill="#b8b8b8"/></svg>
<svg style="position:absolute;left:917px;top:232px;" width="14" height="14" viewBox="0 0 14 14"><path d="M7 2 V12 M2 7 H12" stroke="#c8c8c8" stroke-width="1.2"/></svg>
<span class="t" style="left:954.00px;top:228.02px;font-size:21px;color:#383838;letter-spacing:-0.042px;">Entity 4</span>
<span class="t" style="left:658.00px;top:263.99px;font-size:19.5px;color:#383838;letter-spacing:-0.179px;">Name</span>
<span class="t" style="left:658.00px;top:293.89px;font-size:19.5px;color:#383838;letter-spacing:0.253px;">Wind Mode</span>
<span class="t" style="left:658.00px;top:324.19px;font-size:19.5px;color:#383838;letter-spacing:-0.862px;">Pose</span>
<span class="t" style="left:658.00px;top:354.19px;font-size:19.5px;color:#383838;letter-spacing:0.078px;">Model Canonical Link</span>
<span class="t" style="left:658.00px;top:384.19px;font-size:19.5px;color:#383838;letter-spacing:0.244px;">Model Sdf</span>
<span class="t" style="left:658.00px;top:413.89px;font-size:19.5px;color:#383838;letter-spacing:0.312px;">Parent Entity</span>
<span class="t" style="left:658.00px;top:443.49px;font-size:19.5px;color:#383838;letter-spacing:-0.154px;">Source File Path</span>
<span class="t" style="left:658.00px;top:473.39px;font-size:19.5px;color:#383838;letter-spacing:0.022px;">Self Collide</span>
<span class="t" style="left:658.00px;top:503.39px;font-size:19.5px;color:#383838;letter-spacing:0.055px;">Static</span>
<svg style="position:absolute;left:639px;top:326px;" width="14" height="14" viewBox="0 0 14 14"><path d="M7 2 V12 M2 7 H12" stroke="#666" stroke-width="1.4"/></svg>
<span class="t" style="left:894.60px;top:263.99px;font-size:19.5px;color:#1a1a1a;letter-spacing:0.360px;">ground_plane</span>
<span class="t" style="left:1006.65px;top:413.89px;font-size:19.5px;color:#1a1a1a;">1</span>
<span class="t" style="left:811.20px;top:443.49px;font-size:19.5px;color:#1a1a1a;letter-spacing:0.322px;">…p/nav2_f0ce9p7p.sdf</span>
<div style="left:969px;top:296.5px;width:38px;height:14px;border-radius:7px;background:#dedede"></div><div style="left:969px;top:293.5px;width:20px;height:20px;border-radius:10px;background:#c6c6c6;box-shadow:0 1px 2px rgba(0,0,0,0.2)"></div>
<div style="left:969px;top:476.5px;width:38px;height:14px;border-radius:7px;background:#dedede"></div><div style="left:969px;top:473.5px;width:20px;height:20px;border-radius:10px;background:#c6c6c6;box-shadow:0 1px 2px rgba(0,0,0,0.2)"></div>
<div style="left:969px;top:506.5px;width:38px;height:14px;border-radius:7px;background:#dedede"></div><div style="left:986px;top:503.5px;width:20px;height:20px;border-radius:10px;background:#c6c6c6;box-shadow:0 1px 2px rgba(0,0,0,0.2)"></div>
<div style="left:630px;top:588px;width:401px;height:1px;background:#a4a4a4;"></div>
<div style="left:630px;top:589px;width:401px;height:48px;background:#ececec;"></div>
<span class="t" style="left:636.00px;top:604.49px;font-size:19.5px;color:#4a4a4a;letter-spacing:0.417px;">Entity Tree</span>
<svg style="position:absolute;left:994px;top:601px;" width="24" height="24" viewBox="0 0 24 24"><path d="M12 3 V21 M3 12 H21" stroke="#8a8a8a" stroke-width="1.8"/></svg>
<div style="left:630px;top:666.8px;width:401px;height:30px;background:#b3e1f5;"></div>
<div style="left:630px;top:726.4px;width:401px;height:30.3px;background:#ececec;"></div>
<div style="left:630px;top:756.7px;width:401px;height:29.6px;background:#f1f1f1;"></div>
<div style="left:630px;top:786.3px;width:401px;height:223.7px;background:#fafafa;"></div>
<span class="t" style="left:683.40px;top:641.49px;font-size:19.5px;color:#1a1a1a;letter-spacing:0.793px;">default</span>
<svg style="position:absolute;left:655px;top:639.2px;" width="24" height="22" viewBox="0 0 24 22"><path d="M12 2 L21 6.5 V16 L12 20.5 L3 16 V6.5Z" fill="#0a8ad0"/><path d="M12 2 L21 6.5 L12 11 L3 6.5Z" fill="#5cd4ff"/><path d="M12 11 L21 6.5 V16 L12 20.5Z" fill="#0670b0"/></svg>
<span class="t" style="left:683.40px;top:671.19px;font-size:19.5px;color:#1a1a1a;letter-spacing:0.343px;">ground_plane</span>
<svg style="position:absolute;left:642px;top:667.9px;" width="14" height="24" viewBox="0 0 14 24"><path d="M3 6 L8 12 L3 18" stroke="#8a8a8a" stroke-width="1.6" fill="none"/></svg>
<svg style="position:absolute;left:653px;top:665.9px;" width="28" height="28" viewBox="0 0 28 28"><g transform="translate(14,16.5) scale(0.8)"><path d="M0 -8 V-14 M-7 4 L-12 7 M7 4 L12 7" stroke="#0a6aa0" stroke-width="1.6"/><path d="M0 -8 L7 -4 V4 L0 8 L-7 4 V-4Z" fill="#1ec8f0"/><path d="M0 -8 L7 -4 L0 0 L-7 -4Z" fill="#5fe0ff"/><path d="M0 0 L7 -4 V4 L0 8Z" fill="#12b0dc"/><path d="M0 -19.5 L3.5 -17.5 V-13.5 L0 -11.5 L-3.5 -13.5 V-17.5Z" fill="#0a7ab8"/><path d="M-12 3 L-8.5 5 V9 L-12 11 L-15.5 9 V5Z" fill="#0a7ab8"/><path d="M12 3 L15.5 5 V9 L12 11 L8.5 9 V5Z" fill="#0a7ab8"/></g></svg>
<span class="t" style="left:683.40px;top:701.39px;font-size:19.5px;color:#1a1a1a;letter-spacing:0.953px;">turtlebot3_world</span>
<svg style="position:absolute;left:642px;top:698.1px;" width="14" height="24" viewBox="0 0 14 24"><path d="M3 6 L8 12 L3 18" stroke="#8a8a8a" stroke-width="1.6" fill="none"/></svg>
<svg style="position:absolute;left:653px;top:696.1px;" width="28" height="28" viewBox="0 0 28 28"><g transform="translate(14,16.5) scale(0.8)"><path d="M0 -8 V-14 M-7 4 L-12 7 M7 4 L12 7" stroke="#0a6aa0" stroke-width="1.6"/><path d="M0 -8 L7 -4 V4 L0 8 L-7 4 V-4Z" fill="#1ec8f0"/><path d="M0 -8 L7 -4 L0 0 L-7 -4Z" fill="#5fe0ff"/><path d="M0 0 L7 -4 V4 L0 8Z" fill="#12b0dc"/><path d="M0 -19.5 L3.5 -17.5 V-13.5 L0 -11.5 L-3.5 -13.5 V-17.5Z" fill="#0a7ab8"/><path d="M-12 3 L-8.5 5 V9 L-12 11 L-15.5 9 V5Z" fill="#0a7ab8"/><path d="M12 3 L15.5 5 V9 L12 11 L8.5 9 V5Z" fill="#0a7ab8"/></g></svg>
<span class="t" style="left:683.40px;top:731.49px;font-size:19.5px;color:#1a1a1a;letter-spacing:-0.380px;">sun</span>
<svg style="position:absolute;left:642px;top:728.2px;" width="14" height="24" viewBox="0 0 14 24"><path d="M3 6 L8 12 L3 18" stroke="#8a8a8a" stroke-width="1.6" fill="none"/></svg>
<svg style="position:absolute;left:658px;top:726.2px;" width="18" height="28" viewBox="0 0 18 28"><path d="M9 1.5 A7.5 7.5 0 0 1 16.5 9 C16.5 13 13 15 13 19 H5 C5 15 1.5 13 1.5 9 A7.5 7.5 0 0 1 9 1.5Z" fill="#18e0f0"/><rect x="5" y="19.5" width="8" height="5" rx="1" fill="#156a80"/><rect x="6.5" y="24" width="5" height="2.5" fill="#0d4050"/></svg>
<span class="t" style="left:683.40px;top:761.49px;font-size:19.5px;color:#1a1a1a;letter-spacing:0.974px;">turtlebot3_waffle</span>
<svg style="position:absolute;left:642px;top:758.2px;" width="14" height="24" viewBox="0 0 14 24"><path d="M3 6 L8 12 L3 18" stroke="#8a8a8a" stroke-width="1.6" fill="none"/></svg>
<svg style="position:absolute;left:653px;top:756.2px;" width="28" height="28" viewBox="0 0 28 28"><g transform="translate(14,16.5) scale(0.8)"><path d="M0 -8 V-14 M-7 4 L-12 7 M7 4 L12 7" stroke="#0a6aa0" stroke-width="1.6"/><path d="M0 -8 L7 -4 V4 L0 8 L-7 4 V-4Z" fill="#1ec8f0"/><path d="M0 -8 L7 -4 L0 0 L-7 -4Z" fill="#5fe0ff"/><path d="M0 0 L7 -4 V4 L0 8Z" fill="#12b0dc"/><path d="M0 -19.5 L3.5 -17.5 V-13.5 L0 -11.5 L-3.5 -13.5 V-17.5Z" fill="#0a7ab8"/><path d="M-12 3 L-8.5 5 V9 L-12 11 L-15.5 9 V5Z" fill="#0a7ab8"/><path d="M12 3 L15.5 5 V9 L12 11 L8.5 9 V5Z" fill="#0a7ab8"/></g></svg>
<div style="left:1502px;top:105px;width:350px;height:898px;background:#efefef;"></div>
<svg style="position:absolute;left:1506px;top:549px;" width="8" height="12" viewBox="0 0 8 12"><path d="M1 1 L6.5 5.5 L1 10Z" fill="#555"/></svg>
<svg style="position:absolute;left:1522px;top:548px;" width="2" height="17" viewBox="0 0 2 17"><rect x="0" y="0" width="1" height="1" fill="#aaa"/><rect x="0" y="3" width="1" height="1" fill="#aaa"/><rect x="0" y="6" width="1" height="1" fill="#aaa"/><rect x="0" y="9" width="1" height="1" fill="#aaa"/><rect x="0" y="12" width="1" height="1" fill="#aaa"/><rect x="0" y="15" width="1" height="1" fill="#aaa"/></svg>
<div style="left:1525px;top:106px;width:327px;height:25.7px;background:#b9b9b9;"></div>
<span class="t" style="left:1552.40px;top:109.94px;font-size:18.5px;color:#1e1e1e;">Views</span>
<svg style="position:absolute;left:1527px;top:110px;" width="20" height="18" viewBox="0 0 20 18"><path d="M1.5 6 L6 9 L1.5 12Z" fill="#444"/><rect x="5" y="5" width="13" height="8" rx="3" fill="#444"/></svg>
<div style="left:1832px;top:111px;width:18px;height:17px;background:#f5f5f5;border:1px solid #a8a8a8;border-radius:2px;"></div>
<svg style="position:absolute;left:1834px;top:113px;" width="14" height="13" viewBox="0 0 14 13"><circle cx="7" cy="6.5" r="6" fill="#d42020"/><path d="M4.5 4 L9.5 9 M9.5 4 L4.5 9" stroke="#fff" stroke-width="1.6"/></svg>
<span class="t" style="left:1527.40px;top:144.24px;font-size:18.5px;color:#1e1e1e;letter-spacing:-0.390px;">Type:</span>
<div style="left:1578.4px;top:138.5px;width:184px;height:29px;background:linear-gradient(#fdfdfd,#f0f0f0);border:1px solid #b9b9b9;border-radius:3px;"></div>
<span class="t" style="left:1583.20px;top:143.94px;font-size:18.5px;color:#1e1e1e;letter-spacing:-0.425px;">TopDownOrtho (rvi</span>
<svg style="position:absolute;left:1740px;top:150px;" width="12" height="7" viewBox="0 0 12 7"><path d="M1 1 H11 L6 6Z" fill="#555"/></svg>
<div style="left:1770px;top:138.5px;width:79px;height:30px;background:linear-gradient(#fbfbfb,#efefef);border:1px solid #b9b9b9;border-radius:3px;"></div>
<span class="t" style="left:1790.50px;top:144.24px;font-size:18.5px;color:#1e1e1e;letter-spacing:-0.010px;">Zero</span>
<div style="left:1525px;top:178.4px;width:326px;height:96px;background:#ffffff;border:1px solid #c2c2c2;"></div>
<div style="left:1634px;top:179px;width:1px;height:95px;background:#dedede;"></div>
<svg style="position:absolute;left:1532px;top:186px;" width="12" height="8" viewBox="0 0 12 8"><path d="M1 1 H11 L6 6Z" fill="#555"/></svg>
<span class="t" style="left:1554.80px;top:180.34px;font-size:18.5px;color:#000;font-weight:bold;letter-spacing:-0.450px;">Curren…</span>
<span class="t" style="left:1637.50px;top:180.34px;font-size:18.5px;color:#000;font-weight:bold;letter-spacing:-0.340px;">TopDownOrtho (rviz_d.</span>
<span class="t" style="left:1579.40px;top:202.64px;font-size:18.5px;color:#1e1e1e;letter-spacing:-1.110px;">Nea…</span>
<span class="t" style="left:1637.50px;top:202.64px;font-size:18.5px;color:#1e1e1e;letter-spacing:-0.752px;">0.01</span>
<span class="t" style="left:1579.40px;top:224.94px;font-size:18.5px;color:#1e1e1e;letter-spacing:-0.800px;">Tar…</span>
<span class="t" style="left:1637.50px;top:224.94px;font-size:18.5px;color:#1e1e1e;letter-spacing:-0.649px;">&lt;Fixed Frame&gt;</span>
<span class="t" style="left:1579.40px;top:246.64px;font-size:18.5px;color:#1e1e1e;letter-spacing:-1.256px;">Scale</span>
<span class="t" style="left:1637.50px;top:246.64px;font-size:18.5px;color:#1e1e1e;letter-spacing:-1.289px;">54</span>
<div style="left:1526px;top:266px;width:308px;height:7.5px;overflow:hidden"><span class="t" style="left:53px;top:1px;font-size:18.5px;color:#1e1e1e">Angle</span><span class="t" style="left:111px;top:1px;font-size:18.5px;color:#1e1e1e">-0.000000767</span></div>
<div style="left:1835px;top:179px;width:15px;height:95px;background:#f4f4f4;border-left:1px solid #d8d8d8;"></div>
<svg style="position:absolute;left:1836px;top:182px;" width="13" height="10" viewBox="0 0 13 10"><path d="M2 8 L6.5 3 L11 8Z" fill="#555"/></svg>
<svg style="position:absolute;left:1836px;top:260px;" width="13" height="10" viewBox="0 0 13 10"><path d="M2 2 L6.5 7 L11 2Z" fill="#555"/></svg>
<div style="left:1836px;top:231px;width:14px;height:25px;background:#d4d4d4;"></div>
<div style="left:1527px;top:282.5px;width:102px;height:30px;background:linear-gradient(#fbfbfb,#efefef);border:1px solid #b9b9b9;border-radius:3px;"></div>
<span class="t" style="left:1558.50px;top:288.24px;font-size:18.5px;color:#1e1e1e;letter-spacing:-0.792px;">Save</span>
<div style="left:1637.5px;top:282.5px;width:102px;height:30px;background:linear-gradient(#fbfbfb,#efefef);border:1px solid #b9b9b9;border-radius:3px;"></div>
<span class="t" style="left:1656.00px;top:288.24px;font-size:18.5px;color:#1e1e1e;letter-spacing:-0.648px;">Remove</span>
<div style="left:1747px;top:282.5px;width:102px;height:30px;background:linear-gradient(#fbfbfb,#efefef);border:1px solid #b9b9b9;border-radius:3px;"></div>
<span class="t" style="left:1765.50px;top:288.24px;font-size:18.5px;color:#1e1e1e;letter-spacing:-0.821px;">Rename</span>
<svg style="position:absolute;left:1680px;top:316px;" width="20" height="3" viewBox="0 0 20 3"><rect x="0" y="0" width="1" height="1" fill="#b0b0b0"/><rect x="3" y="0" width="1" height="1" fill="#b0b0b0"/><rect x="6" y="0" width="1" height="1" fill="#b0b0b0"/><rect x="9" y="0" width="1" height="1" fill="#b0b0b0"/><rect x="12" y="0" width="1" height="1" fill="#b0b0b0"/><rect x="15" y="0" width="1" height="1" fill="#b0b0b0"/><rect x="18" y="0" width="1" height="1" fill="#b0b0b0"/></svg>
<div style="left:1525px;top:322px;width:327px;height:25.7px;background:#b9b9b9;"></div>
<span class="t" style="left:1552.40px;top:325.94px;font-size:18.5px;color:#1e1e1e;">Docking</span>
<svg style="position:absolute;left:1527px;top:326px;" width="20" height="18" viewBox="0 0 20 18"><path d="M10 4 L17 10 H15 V15 H5 V10 H3Z" fill="#111"/></svg>
<div style="left:1832px;top:327px;width:18px;height:17px;background:#f5f5f5;border:1px solid #a8a8a8;border-radius:2px;"></div>
<svg style="position:absolute;left:1834px;top:329px;" width="14" height="13" viewBox="0 0 14 13"><circle cx="7" cy="6.5" r="6" fill="#d42020"/><path d="M4.5 4 L9.5 9 M9.5 4 L4.5 9" stroke="#fff" stroke-width="1.6"/></svg>
<span class="t" style="left:1537.50px;top:373.14px;font-size:18.5px;color:#000;font-weight:bold;letter-spacing:-0.612px;">Feedback:</span>
<span class="t" style="left:1689.00px;top:373.14px;font-size:18.5px;color:#1e1e1e;letter-spacing:-0.151px;">unknown</span>
<span class="t" style="left:1537.40px;top:417.64px;font-size:18.5px;color:#1e1e1e;letter-spacing:-0.223px;">State:</span>
<span class="t" style="left:1689.70px;top:417.64px;font-size:18.5px;color:#1e1e1e;letter-spacing:-0.289px;">none</span>
<span class="t" style="left:1537.40px;top:441.64px;font-size:18.5px;color:#1e1e1e;letter-spacing:-0.269px;">Time taken:</span>
<span class="t" style="left:1689.70px;top:441.64px;font-size:18.5px;color:#1e1e1e;letter-spacing:-0.893px;">0 s</span>
<span class="t" style="left:1537.40px;top:465.64px;font-size:18.5px;color:#1e1e1e;letter-spacing:-0.342px;">Retries:</span>
<span class="t" style="left:1689.70px;top:465.64px;font-size:18.5px;color:#1e1e1e;">0</span>
<div style="left:1536.3px;top:499.3px;width:306px;height:159px;background:#ebebeb;border:1px solid #d6d6d6;border-radius:2px;"></div>
<span class="t" style="left:1549.50px;top:514.14px;font-size:18.5px;color:#1e1e1e;letter-spacing:-0.368px;width:150px;overflow:hidden;">Nav. to staging pos</span>
<div style="left:1706.5px;top:514.5px;width:16.5px;height:16.5px;background:#ffffff;border:1px solid #b0b0b0;border-radius:2px;"></div>
<svg style="position:absolute;left:1707.5px;top:515.5px;" width="15" height="15" viewBox="0 0 15 15"><path d="M3 7.5 L6 11.5 L12 3" stroke="#111" stroke-width="2" fill="none"/></svg>
<div style="left:1706.5px;top:547.5px;width:16.5px;height:16.5px;background:#ffffff;border:1px solid #b0b0b0;border-radius:2px;"></div>
<svg style="position:absolute;left:1707.5px;top:548.5px;" width="15" height="15" viewBox="0 0 15 15"><path d="M3 7.5 L6 11.5 L12 3" stroke="#111" stroke-width="2" fill="none"/></svg>
<span class="t" style="left:1549.50px;top:546.64px;font-size:18.5px;color:#1e1e1e;letter-spacing:-0.527px;">Dock id</span>
<div style="left:1730px;top:542px;width:97.5px;height:28.5px;background:#ffffff;border:1px solid #b4b4b4;border-radius:3px;"></div>
<span class="t" style="left:1549.50px;top:583.94px;font-size:18.5px;color:#1e1e1e;letter-spacing:-0.251px;">Dock type</span>
<div style="left:1726.7px;top:579px;width:101px;height:28.7px;background:linear-gradient(#fdfdfd,#f0f0f0);border:1px solid #b9b9b9;border-radius:3px;"></div>
<span class="t" style="left:1731.70px;top:584.09px;font-size:18.5px;color:#1e1e1e;letter-spacing:0.197px;">Default</span>
<svg style="position:absolute;left:1805.7px;top:590.35px;" width="12" height="7" viewBox="0 0 12 7"><path d="M1 1 H11 L6 6Z" fill="#555"/></svg>
<span class="t" style="left:1549.50px;top:620.64px;font-size:18.5px;color:#1e1e1e;letter-spacing:-0.672px;">Dock pose {X</span>
<div style="left:1661.6px;top:615.6px;width:33.3px;height:29px;background:#ececec;border:1px solid #c4c4c4;border-radius:3px;"></div>
<div style="left:1721.5px;top:615.6px;width:33.3px;height:29px;background:#ececec;border:1px solid #c4c4c4;border-radius:3px;"></div>
<div style="left:1781px;top:615.6px;width:33.3px;height:29px;background:#ececec;border:1px solid #c4c4c4;border-radius:3px;"></div>
<span class="t" style="left:1701.80px;top:620.64px;font-size:18.5px;color:#1e1e1e;">Y</span>
<span class="t" style="left:1763.80px;top:620.64px;font-size:18.5px;color:#1e1e1e;">θ</span>
<span class="t" style="left:1822.00px;top:620.64px;font-size:18.5px;color:#1e1e1e;">}</span>
<div style="left:1535.3px;top:666.5px;width:306.3px;height:29.8px;background:linear-gradient(#fbfbfb,#efefef);border:1px solid #b9b9b9;border-radius:3px;"></div>
<span class="t" style="left:1643.45px;top:672.14px;font-size:18.5px;color:#1e1e1e;letter-spacing:0.054px;">Dock robot</span>
<div style="left:1535.3px;top:704.6px;width:306.3px;height:29.8px;background:linear-gradient(#fbfbfb,#efefef);border:1px solid #b9b9b9;border-radius:3px;"></div>
<span class="t" style="left:1633.45px;top:710.24px;font-size:18.5px;color:#1e1e1e;">Undock robot</span>
<svg style="position:absolute;left:1680px;top:747px;" width="20" height="3" viewBox="0 0 20 3"><rect x="0" y="0" width="1" height="1" fill="#b0b0b0"/><rect x="3" y="0" width="1" height="1" fill="#b0b0b0"/><rect x="6" y="0" width="1" height="1" fill="#b0b0b0"/><rect x="9" y="0" width="1" height="1" fill="#b0b0b0"/><rect x="12" y="0" width="1" height="1" fill="#b0b0b0"/><rect x="15" y="0" width="1" height="1" fill="#b0b0b0"/><rect x="18" y="0" width="1" height="1" fill="#b0b0b0"/></svg>
<div style="left:1525px;top:752.1px;width:327px;height:25.4px;background:#b9b9b9;"></div>
<span class="t" style="left:1552.40px;top:756.04px;font-size:18.5px;color:#1e1e1e;">Selector</span>
<svg style="position:absolute;left:1527px;top:756.1px;" width="20" height="18" viewBox="0 0 20 18"><path d="M9 1.5 L16.5 9 L9 16.5 L1.5 9Z" fill="#a8bcee" stroke="#3a5ab0" stroke-width="1.3"/></svg>
<div style="left:1832px;top:757.1px;width:18px;height:17px;background:#f5f5f5;border:1px solid #a8a8a8;border-radius:2px;"></div>
<svg style="position:absolute;left:1834px;top:759.1px;" width="14" height="13" viewBox="0 0 14 13"><circle cx="7" cy="6.5" r="6" fill="#d42020"/><path d="M4.5 4 L9.5 9 M9.5 4 L4.5 9" stroke="#fff" stroke-width="1.6"/></svg>
<span class="t" style="left:1535.50px;top:793.14px;font-size:18.5px;color:#1e1e1e;letter-spacing:0.110px;">Controller</span>
<span class="t" style="left:1692.40px;top:793.14px;font-size:18.5px;color:#1e1e1e;letter-spacing:-0.396px;">Planner</span>
<div style="left:1535.5px;top:822.2px;width:149.1px;height:29.5px;background:linear-gradient(#fdfdfd,#f0f0f0);border:1px solid #b9b9b9;border-radius:3px;"></div>
<span class="t" style="left:1540.50px;top:827.69px;font-size:18.5px;color:#1e1e1e;letter-spacing:0.140px;">Default</span>
<svg style="position:absolute;left:1662.6px;top:833.95px;" width="12" height="7" viewBox="0 0 12 7"><path d="M1 1 H11 L6 6Z" fill="#555"/></svg>
<div style="left:1692.4px;top:822.2px;width:149.5px;height:29.5px;background:linear-gradient(#fdfdfd,#f0f0f0);border:1px solid #b9b9b9;border-radius:3px;"></div>
<span class="t" style="left:1697.40px;top:827.69px;font-size:18.5px;color:#1e1e1e;letter-spacing:0.140px;">Default</span>
<svg style="position:absolute;left:1819.9px;top:833.95px;" width="12" height="7" viewBox="0 0 12 7"><path d="M1 1 H11 L6 6Z" fill="#555"/></svg>
<span class="t" style="left:1535.50px;top:863.14px;font-size:18.5px;color:#1e1e1e;letter-spacing:-0.676px;">Goal Checker</span>
<span class="t" style="left:1692.40px;top:863.14px;font-size:18.5px;color:#1e1e1e;letter-spacing:-0.151px;">Smoother</span>
<div style="left:1535.5px;top:892.3px;width:149.1px;height:29.5px;background:linear-gradient(#fdfdfd,#f0f0f0);border:1px solid #b9b9b9;border-radius:3px;"></div>
<span class="t" style="left:1540.50px;top:897.79px;font-size:18.5px;color:#1e1e1e;letter-spacing:0.140px;">Default</span>
<svg style="position:absolute;left:1662.6px;top:904.05px;" width="12" height="7" viewBox="0 0 12 7"><path d="M1 1 H11 L6 6Z" fill="#555"/></svg>
<div style="left:1692.4px;top:892.3px;width:149.5px;height:29.5px;background:linear-gradient(#fdfdfd,#f0f0f0);border:1px solid #b9b9b9;border-radius:3px;"></div>
<span class="t" style="left:1697.40px;top:897.79px;font-size:18.5px;color:#1e1e1e;letter-spacing:0.140px;">Default</span>
<svg style="position:absolute;left:1819.9px;top:904.05px;" width="12" height="7" viewBox="0 0 12 7"><path d="M1 1 H11 L6 6Z" fill="#555"/></svg>
<span class="t" style="left:1535.50px;top:934.14px;font-size:18.5px;color:#1e1e1e;letter-spacing:-0.566px;">Progress Checker</span>
<div style="left:1535.5px;top:963px;width:306.4px;height:29.5px;background:linear-gradient(#fdfdfd,#f0f0f0);border:1px solid #b9b9b9;border-radius:3px;"></div>
<span class="t" style="left:1540.50px;top:968.49px;font-size:18.5px;color:#1e1e1e;letter-spacing:0.140px;">Default</span>
<svg style="position:absolute;left:1819.9px;top:974.75px;" width="12" height="7" viewBox="0 0 12 7"><path d="M1 1 H11 L6 6Z" fill="#555"/></svg>
</body></html>
